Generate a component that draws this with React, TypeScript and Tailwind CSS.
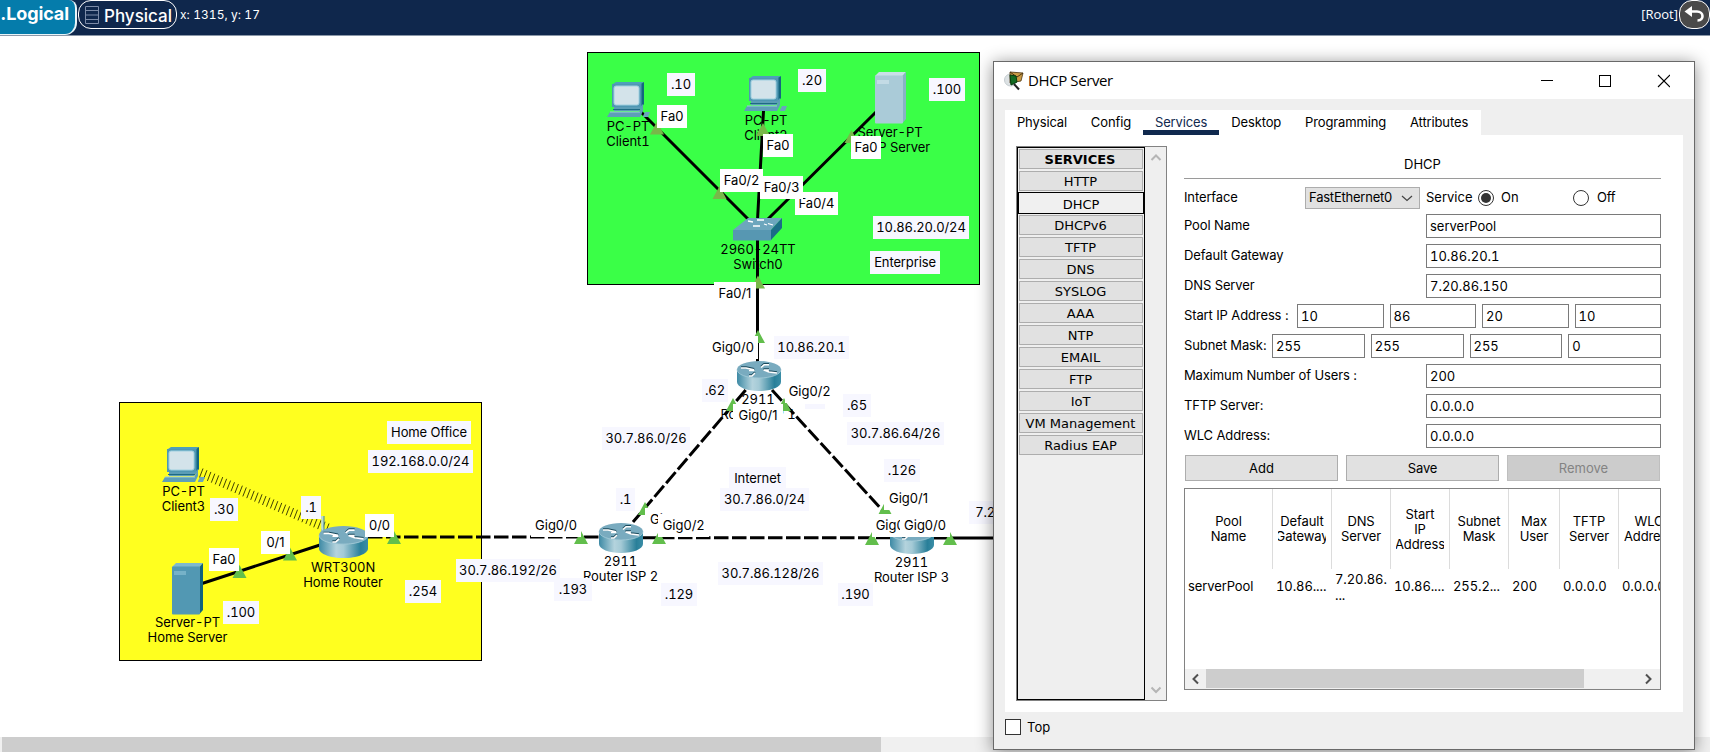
import React from "react";

type LabelData = { x: number; y: number; w: number; text: string; kind?: "port" | "note" };

const LABELS: LabelData[] = [
  { x: 714, y: 282, w: 42, text: "Fa0/1", kind: "port" },
  { x: 657, y: 105, w: 30, text: "Fa0", kind: "port" },
  { x: 763, y: 134, w: 30, text: "Fa0", kind: "port" },
  { x: 851, y: 136, w: 30, text: "Fa0", kind: "port" },
  { x: 720, y: 169, w: 43, text: "Fa0/2", kind: "port" },
  { x: 795, y: 192, w: 43, text: "Fa0/4", kind: "port" },
  { x: 760, y: 176, w: 43, text: "Fa0/3", kind: "port" },
  { x: 708, y: 336, w: 50, text: "Gig0/0", kind: "port" },
  { x: 785, y: 380, w: 49, text: "Gig0/2", kind: "port" },
  { x: 733, y: 404, w: 50, text: "Gig0/1", kind: "port" },
  { x: 645, y: 508, w: 49, text: "Gig0/1", kind: "port" },
  { x: 658, y: 514, w: 51, text: "Gig0/2", kind: "port" },
  { x: 531, y: 514, w: 50, text: "Gig0/0", kind: "port" },
  { x: 872, y: 514, w: 49, text: "Gig0/2", kind: "port" },
  { x: 884, y: 487, w: 49, text: "Gig0/1", kind: "port" },
  { x: 900, y: 514, w: 50, text: "Gig0/0", kind: "port" },
  { x: 209, y: 548, w: 30, text: "Fa0", kind: "port" },
  { x: 261, y: 531, w: 29, text: "0/1", kind: "port" },
  { x: 365, y: 514, w: 29, text: "0/0", kind: "port" },
  { x: 667, y: 73, w: 28, text: ".10" },
  { x: 798, y: 69, w: 28, text: ".20" },
  { x: 929, y: 78, w: 36, text: ".100" },
  { x: 873, y: 216, w: 96, text: "10.86.20.0/24" },
  { x: 870, y: 251, w: 70, text: "Enterprise" },
  { x: 774, y: 336, w: 75, text: "10.86.20.1" },
  { x: 702, y: 379, w: 26, text: ".62" },
  { x: 843, y: 394, w: 28, text: ".65" },
  { x: 847, y: 422, w: 97, text: "30.7.86.64/26" },
  { x: 602, y: 427, w: 88, text: "30.7.86.0/26" },
  { x: 387, y: 421, w: 84, text: "Home Office" },
  { x: 368, y: 450, w: 105, text: "192.168.0.0/24" },
  { x: 210, y: 498, w: 28, text: ".30" },
  { x: 301, y: 496, w: 20, text: ".1" },
  { x: 223, y: 601, w: 36, text: ".100" },
  { x: 405, y: 580, w: 36, text: ".254" },
  { x: 456, y: 559, w: 104, text: "30.7.86.192/26" },
  { x: 729, y: 467, w: 57, text: "Internet" },
  { x: 720, y: 488, w: 89, text: "30.7.86.0/24" },
  { x: 616, y: 488, w: 19, text: ".1" },
  { x: 884, y: 459, w: 36, text: ".126" },
  { x: 969, y: 501, w: 44, text: "7.20." },
  { x: 554, y: 578, w: 38, text: ".193" },
  { x: 661, y: 583, w: 36, text: ".129" },
  { x: 718, y: 562, w: 105, text: "30.7.86.128/26" },
  { x: 838, y: 583, w: 35, text: ".190" },
];

const NAMES = [
  { x: 628, y: 119, lines: ["PC-PT", "Client1"] },
  { x: 766, y: 113, lines: ["PC-PT", "Client2"] },
  { x: 890, y: 125, lines: ["Server-PT", "DHCP Server"] },
  { x: 758, y: 242, lines: ["2960-24TT", "Switch0"] },
  { x: 758, y: 392, lines: ["2911", "Router ISP 1"] },
  { x: 183.5, y: 484, lines: ["PC-PT", "Client3"] },
  { x: 187.5, y: 615, lines: ["Server-PT", "Home Server"] },
  { x: 343, y: 560, lines: ["WRT300N", "Home Router"] },
  { x: 620.5, y: 554, lines: ["2911", "Router ISP 2"] },
  { x: 911.5, y: 555, lines: ["2911", "Router ISP 3"] },
];

/* Apex x, base y of every link-status triangle */
const LINK_LIGHTS: [number, number][] = [
  [657, 134.5], [719.5, 199], [763, 136], [851.5, 143], [758, 288.5], [758, 343],
  [733, 411], [784, 411], [645, 515], [581, 544], [659, 544], [885, 515],
  [872, 545], [950, 545], [239.5, 578], [290, 560.5], [394, 544],
];

const TABS = ["Physical", "Config", "Services", "Desktop", "Programming", "Attributes"];
const SERVICES = ["HTTP", "DHCP", "DHCPv6", "TFTP", "DNS", "SYSLOG", "AAA", "NTP", "EMAIL", "FTP", "IoT", "VM Management", "Radius EAP"];

function Pc({ x, y }: { x: number; y: number }) {
  return (
    <g transform={`translate(${x} ${y})`}>
      <path d="M6 2 L9 0 H37 L34 2Z" fill="#4f9fba" />
      <path d="M34 2 L37 0 V22 L34 26Z" fill="#14667f" />
      <rect x="5" y="2" width="29.500" height="23" fill="#4f97b3" />
      <rect x="7" y="4" width="25" height="19" rx="2" fill="#d3e3ea" stroke="#9fd0e0" strokeWidth="1" />
      <path d="M7 25 H33 L36 22 V25 L32 29 H7Z" fill="#5b9db6" />
      <path d="M6 27.500 H33" stroke="#1d6a84" strokeWidth="1" />
      <path d="M3 30 H32 L36 24 V29 L33 35 H0Z" fill="#5e9fb8" />
      <path d="M3 30 H33" stroke="#9ccbdb" strokeWidth="1" />
      <path d="M36 34 L38 30 H43 L41 35 H36Z" fill="#6aa5bd" />
    </g>
  );
}

function Server({ x, y, front, side, top }: { x: number; y: number; front: string; side: string; top: string }) {
  return (
    <g transform={`translate(${x} ${y})`}>
      <path d="M0 4 L4 0 H31 L27.500 4Z" fill={top} />
      <path d="M27.500 4 L31 0 V47 L27.500 51Z" fill={side} />
      <rect y="3.500" width="28" height="48" rx="1" fill={front} />
      <rect x="2" y="8" width="12" height="4" fill={top} opacity="0.8" />
    </g>
  );
}

function Router({ x, y, w = 44, h = 30 }: { x: number; y: number; w?: number; h?: number }) {
  return (
    <g transform={`translate(${x} ${y}) scale(${w / 44} ${h / 30})`}>
      <path d="M0 8.500 V21 C0 26 10 30 22 30 C34 30 44 26 44 21 V8.500Z" fill="url(#drum)" />
      <ellipse cx="22" cy="8.500" rx="22" ry="8.500" fill="#79abbf" />
      <path d="M0 8.500 C0 13.500 10 17 22 17 C34 17 44 13.500 44 8.500" fill="none" stroke="#a5cbd8" strokeWidth="0.800" />
      <g fill="none" strokeLinejoin="round">
        <path d="M4 7 H9 L17 8.800 M17.500 9.500 H12 M24 6.500 L27 3.800 H32 M18 12 L15 15 H12 M40 12 L32 11 L27 9 H32" stroke="#1a4a5c" strokeWidth="2" transform="translate(0 -0.700)" />
        <path d="M4 7 H9 L17 8.800 M17.500 9.500 H12 M24 6.500 L27 3.800 H32 M18 12 L15 15 H12 M40 12 L32 11 L27 9 H32" stroke="#fff" strokeWidth="1.600" />
      </g>
    </g>
  );
}

function Wireless() {
  const ticks = Array.from({ length: 33 }, (_, i) => {
    const t = i / 32;
    return [201 + t * 126, 473 + t * 55];
  });
  return (
    <g stroke="#2b2b00" strokeWidth="0.900" fill="none">
      {ticks.map(([x, y], i) => (
        <path key={i} d={`M${x + 2} ${y - 4.500} L${x - 1.500} ${y + 4.500}`} />
      ))}
    </g>
  );
}

function Topology() {
  return (
    <div className="relative h-[701px] w-full overflow-hidden bg-white text-[13px] leading-[15px] text-black">
      {/* Canvas origin is the window's top-left corner */}
      <div className="absolute -top-9 left-0 h-[740px] w-[1710px]">
        <div className="absolute left-[587px] top-[52px] h-[233px] w-[393px] border border-black bg-[#3aff47]" />
        <div className="absolute left-[119px] top-[402px] h-[259px] w-[363px] border border-black bg-[#ffff1f]" />
        {NAMES.map((n) => (
          <div key={n.x + "-" + n.y} className="absolute -translate-x-1/2 whitespace-nowrap text-center tabular-nums tracking-[-0.060px]" style={{ left: n.x, top: n.y }}>
            {n.lines.map((l) => (
              <div key={l}>{l}</div>
            ))}
          </div>
        ))}
        <svg className="absolute left-0 top-0" width="1000" height="740" viewBox="0 0 1000 740">
          <defs>
            <linearGradient id="drum" x1="0" x2="1" y1="0" y2="0">
              <stop offset="0" stopColor="#3e8aa5" />
              <stop offset="0.350" stopColor="#b4d3dd" />
              <stop offset="0.500" stopColor="#a4cad6" />
              <stop offset="0.850" stopColor="#297f99" />
              <stop offset="1" stopColor="#3a8da6" />
            </linearGradient>
          </defs>
          <g stroke="#000" strokeWidth="3" fill="none">
            <path d="M640 111 L749 220 M763.500 111 L757.500 220 M876 112 L767 220 M757.500 238 V362 M202 583.500 L320 545 M930 538 H996" />
            <path d="M745.700 390 L633 522 M772 390 L884 512 M368 537 H600 M642 537.700 H892" strokeDasharray="14.500 3.500" />
          </g>
          <Wireless />
          <Pc x={607} y={82} />
          <Pc x={744} y={76} />
          <Pc x={162} y={447} />
          <Server x={875} y={72} front="#aacbd8" side="#88b3c4" top="#c9dfe8" />
          <Server x={172} y={563} front="#5298b3" side="#10637d" top="#7fb9cd" />
          <g transform="translate(733 218)">
            <path d="M0 12 L15 0 H49 L38 12Z" fill="#6da6bd" />
            <path d="M38 12 L49 0 V10 L38 22Z" fill="#1b6d87" />
            <path d="M0 12 H38 V22.500 H0Z" fill="#5797b2" />
            <path d="M15 3 L20 4 M24 2 H31 M35 5.500 L40 7 M20 8 H27 M31 6 L34 7" stroke="#fff" strokeWidth="1.300" />
          </g>
          <Router x={737} y={361} />
          <Router x={599} y={523} />
          <Router x={890} y={524} />
          <path d="M322.500 516 V532" stroke="#b9d9d8" strokeWidth="2.500" />
          <path d="M324 516 V532" stroke="#3c8797" strokeWidth="1" />
          <Router x={319} y={526} w={49} h={32} />
          {LINK_LIGHTS.map(([x, y]) => (
            <path key={x + "-" + y} fill={y < 300 ? "#78b84a" : "#62be4c"} d={`M${x} ${y - 13} L${x + 7} ${y} H${x - 7}Z`} />
          ))}
        </svg>
        <div className="absolute left-[805px] top-[404px] h-[5px] w-5 bg-[#f6f6ff]" />
        {LABELS.map((l, i) => (
          <div
            key={i}
            className={
              "absolute flex h-[23px] items-center justify-center overflow-hidden whitespace-nowrap " +
              (l.kind === "port" ? "bg-white" : "bg-[#f7f7ff]")
            }
            style={{ left: l.x, top: l.y, width: l.w }}
          >
            <span className={l.kind === "port" ? "proportional-nums" : "tabular-nums tracking-[-0.120px]"}>{l.text}</span>
          </div>
        ))}
      </div>
    </div>
  );
}

function Field({ value, className }: { value: string; className: string }) {
  return <div className={"flex h-6 items-center border border-[#7a7a7a] bg-white pl-[3px] pt-px tabular-nums " + className}>{value}</div>;
}

function Row({ label, children }: { label: string; children: React.ReactNode }) {
  return (
    <div className="mb-1.5 flex h-6 items-center justify-between">
      <span className="whitespace-nowrap tracking-[-0.120px]">{label}</span>
      {children}
    </div>
  );
}

function Radio({ on }: { on?: boolean }) {
  return (
    <span className="flex size-4 items-center justify-center rounded-full border border-[#333] bg-white">
      {on && <span className="size-2.5 rounded-full bg-[#333]" />}
    </span>
  );
}

function Chevron({ d, color, width = 1.2 }: { d: string; color: string; width?: number }) {
  return (
    <svg width="12" height="12" viewBox="0 0 12 12" fill="none" stroke={color} strokeWidth={width}>
      <path d={d} />
    </svg>
  );
}

function TitleBar() {
  return (
    <div className="flex h-[37px] items-center bg-white pl-2.5">
      <svg width="20" height="20" viewBox="0 0 20 20">
        <circle cx="6.500" cy="9" r="6" fill="#dde2e4" stroke="#c4ccd0" />
        <path d="M6 1 L19 2 L17 10 L6 12Z" fill="#c99a45" stroke="#4a3312" strokeWidth="0.800" />
        <path d="M6 1 L13 6 L19 2" fill="none" stroke="#4a3312" />
        <path d="M6 4 L12 5 L13 11 L7 14Z" fill="#136b22" stroke="#053d0d" />
        <path d="M10 13 L15 18.500" stroke="#222" strokeWidth="2" />
      </svg>
      <span className="ml-1 pb-px font-['Open_Sans','Noto_Sans',sans-serif] text-[15px] tracking-[-0.400px]">DHCP Server</span>
      <svg className="ml-auto mr-6" width="130" height="14" viewBox="0 0 130 14" fill="none" stroke="#000" strokeWidth="1.200" shapeRendering="crispEdges">
        <path d="M1 6.500 H13" />
        <rect x="59.500" y="1.500" width="11" height="11" />
        <path d="M118 1 L130 13 M130 1 L118 13" shapeRendering="auto" strokeWidth="1.100" />
      </svg>
    </div>
  );
}

function ServiceList() {
  return (
    <div className="flex h-[555px] w-[151px] border border-[#828282] bg-[#efefef] font-['DejaVu_Sans',Verdana,sans-serif] text-[13px]">
      <div className="flex h-[553px] w-32 flex-col gap-0.5 border border-black px-px pt-px">
        <div className="flex h-5 shrink-0 items-center justify-center border border-[#adadad] bg-[#e1e1e1] pt-px pr-0.5 font-bold">SERVICES</div>
        {SERVICES.map((s) => (
          <div
            key={s}
            className={
              s === "DHCP"
                ? "-mx-px -my-px flex h-[22px] shrink-0 items-center justify-center border border-black bg-[#f0f0f0] pt-[3px]"
                : "flex h-5 shrink-0 items-center justify-center border border-[#adadad] bg-[#e1e1e1] pt-px pr-px"
            }
          >
            {s}
          </div>
        ))}
      </div>
      <div className="flex flex-1 flex-col items-center justify-between py-1">
        <Chevron d="M1.500 9 L6 4.500 L10.500 9" color="#b5b5b5" width={2} />
        <Chevron d="M1.500 3.500 L6 8 L10.500 3.500" color="#b5b5b5" width={2} />
      </div>
    </div>
  );
}

function HeaderCell({ lines, className }: { lines: string[]; className: string }) {
  return (
    <div className={"flex h-20 shrink-0 flex-col items-center justify-center overflow-hidden whitespace-nowrap px-[5px] leading-[15px] " + className}>
      <div className="flex w-full flex-col items-center overflow-hidden">
        {lines.map((l) => (
          <div key={l}>{l}</div>
        ))}
      </div>
    </div>
  );
}

function PoolTable() {
  return (
    <div className="mt-[7px] flex h-[202px] flex-col overflow-hidden border border-[#828282] bg-white tracking-[-0.100px]">
      <div className="flex">
        <HeaderCell lines={["Pool", "Name"]} className="w-[88px] border-r border-[#dcdcdc]" />
        <HeaderCell lines={["Default", "Gateway"]} className="w-[59px] border-r border-[#dcdcdc]" />
        <HeaderCell lines={["DNS", "Server"]} className="w-[59px] border-r border-[#dcdcdc]" />
        <HeaderCell lines={["Start", "IP", "Address"]} className="w-[59px] border-r border-[#dcdcdc]" />
        <HeaderCell lines={["Subnet", "Mask"]} className="w-[59px] border-r border-[#dcdcdc]" />
        <HeaderCell lines={["Max", "User"]} className="w-[51px] border-r border-[#dcdcdc]" />
        <HeaderCell lines={["TFTP", "Server"]} className="w-[59px] border-r border-[#dcdcdc]" />
        <HeaderCell lines={["WLC", "Address"]} className="w-[60px]" />
      </div>
      <div className="flex h-9 items-center whitespace-nowrap tabular-nums">
        <div className="w-[88px] shrink-0 pl-[3px]">serverPool</div>
        <div className="w-[59px] shrink-0 pl-[3px]">10.86....</div>
        <div className="w-[59px] shrink-0 pl-[3px] leading-[16px]">
          7.20.86.
          <br />
          ...
        </div>
        <div className="w-[59px] shrink-0 pl-[3px]">10.86....</div>
        <div className="w-[59px] shrink-0 pl-[3px]">255.2...</div>
        <div className="w-[51px] shrink-0 pl-[3px]">200</div>
        <div className="w-[59px] shrink-0 pl-[3px]">0.0.0.0</div>
        <div className="w-[60px] shrink-0 pl-[3px]">0.0.0.0</div>
      </div>
      <div className="mt-auto flex h-5 items-center bg-[#f0f0f0]">
        <div className="flex w-[21px] justify-center">
          <Chevron d="M8 1.500 L3.500 6 L8 10.500" color="#505050" width={2} />
        </div>
        <div className="h-full w-[378px] border-b border-[#f0f0f0] bg-[#cdcdcd]" />
        <div className="ml-auto mr-1.5">
          <Chevron d="M4 1.500 L8.500 6 L4 10.500" color="#505050" width={2} />
        </div>
      </div>
    </div>
  );
}

function DhcpForm() {
  return (
    <div className="flex w-[477px] flex-col">
      <div className="h-[33px] border-b border-[#9a9a9a] pt-2.5 text-center leading-4">DHCP</div>
      <div className="mb-1.5 mt-2 flex h-[21px] items-center">
        <span className="w-[121px] tracking-[-0.120px]">Interface</span>
        <div className="flex h-[22px] w-[115px] shrink-0 items-center justify-between border border-[#adadad] bg-[#e1e1e1] pl-[3px] pr-1.5 tracking-[-0.220px]">
          FastEthernet0
          <Chevron d="M1 4 L6 8.500 L11 4" color="#444" />
        </div>
        <span className="ml-1.5 w-[52px]">Service</span>
        <Radio on />
        <span className="ml-[7px] w-[72px]">On</span>
        <Radio />
        <span className="ml-2 tracking-[-0.200px]">Off</span>
      </div>
      <Row label="Pool Name"><Field value="serverPool" className="w-[235px]" /></Row>
      <Row label="Default Gateway"><Field value="10.86.20.1" className="w-[235px]" /></Row>
      <Row label="DNS Server"><Field value="7.20.86.150" className="w-[235px]" /></Row>
      <Row label="Start IP Address :">
        <div className="flex w-[364px] gap-1.5">
          <Field value="10" className="flex-1" />
          <Field value="86" className="flex-1" />
          <Field value="20" className="flex-1" />
          <Field value="10" className="flex-1" />
        </div>
      </Row>
      <Row label="Subnet Mask:">
        <div className="flex w-[389px] gap-1.5">
          <Field value="255" className="flex-1" />
          <Field value="255" className="flex-1" />
          <Field value="255" className="flex-1" />
          <Field value="0" className="flex-1" />
        </div>
      </Row>
      <Row label="Maximum Number of Users :"><Field value="200" className="w-[235px]" /></Row>
      <Row label="TFTP Server:"><Field value="0.0.0.0" className="w-[235px]" /></Row>
      <Row label="WLC Address:"><Field value="0.0.0.0" className="w-[235px]" /></Row>
      <div className="mt-px flex gap-2 px-px">
        <div className="flex h-[26px] flex-1 items-center justify-center border border-[#adadad] bg-[#e1e1e1] pt-px">Add</div>
        <div className="flex h-[26px] flex-1 items-center justify-center border border-[#adadad] bg-[#e1e1e1] pt-px tracking-[-0.200px]">Save</div>
        <div className="flex h-[26px] flex-1 items-center justify-center border border-[#bfbfbf] bg-[#ccc] pt-px text-[#838383]">Remove</div>
      </div>
      <PoolTable />
    </div>
  );
}

function ServerDialog() {
  return (
    <div className="absolute left-[993px] top-[61px] flex h-[689px] w-[702px] flex-col border border-[#696969] bg-[#efefef] text-[13px] text-black shadow-[0_2px_16px_rgba(0,0,0,0.45)]">
      <TitleBar />
      <div className="ml-[11px] mt-[11px] flex h-[25px] w-[476px] bg-white tracking-[-0.120px]">
        {TABS.map((t) => (
          <div
            key={t}
            className={
              t === "Services"
                ? "flex h-full items-center border-b-[5px] border-[#10294e] px-3 text-[#10294e]"
                : "flex h-full items-center px-[11.900px] pb-[5px]"
            }
          >
            <span className="pt-[6px]">{t}</span>
          </div>
        ))}
      </div>
      <div className="ml-[11px] flex h-[577px] w-[678px] gap-[17px] bg-white pl-[11px]">
        <div className="pt-[11px]"><ServiceList /></div>
        <div className="pt-[11px]"><DhcpForm /></div>
      </div>
      <div className="ml-[11px] mt-[7px] flex h-4 items-center gap-1.5">
        <span className="size-4 border border-[#333] bg-white" />
        <span className="pt-0.5">Top</span>
      </div>
    </div>
  );
}

function TopBar() {
  return (
    <div className="flex h-9 items-start border-b border-[#8a97a8] bg-[#0f274c] text-white">
      <div className="flex h-[35px] w-[77px] items-start justify-end overflow-hidden rounded-br-xl rounded-tr-lg border-b border-r-2 border-[#e8f4f8] bg-[#057cab] pr-1.5 pt-0.5">
        <span className="whitespace-nowrap text-[18px] font-bold leading-6 tracking-[-0.100px]">.Logical</span>
      </div>
      <div className="ml-px flex h-[29px] w-[99px] items-center rounded-[13px] border border-white pl-1.5">
        <svg width="14" height="18" viewBox="0 0 14 18" fill="none" stroke="#7d8ca8">
          <path d="M0.500 0.500 H13.500 V17.500 H0.500Z M0.500 4.500 H13.500 M0.500 9 H13.500 M0.500 13.500 H13.500" />
        </svg>
        <span className="ml-[5px] pt-0.5 text-[17px] font-medium leading-6">Physical</span>
      </div>
      <span className="ml-[3px] text-[12px] leading-[30px] tracking-[0.050px] tabular-nums">x: 1315, y: 17</span>
      <span className="ml-auto font-['Open_Sans','Noto_Sans',sans-serif] text-[13px] leading-7">[Root]</span>
      <div className="ml-px flex h-[29px] w-[31px] items-center justify-center rounded-[13px] border border-white bg-[#4a4a4a]">
        <svg width="21" height="17" viewBox="0 0 21 17" fill="none" stroke="#fff" strokeWidth="2.600">
          <path d="M6 5.500 H13 C20 5.500 20.500 14.500 13.500 14.500" />
          <path d="M0.500 5.500 L8 0 V11Z" fill="#fff" stroke="none" />
        </svg>
      </div>
    </div>
  );
}

export default function App() {
  return (
    <div className="relative flex h-[752px] w-[1710px] flex-col overflow-hidden bg-white font-[Inter,'Liberation_Sans',sans-serif]">
      <TopBar />
      <Topology />
      <div className="flex flex-1 bg-[#f0f0f0] pl-0.5">
        <div className="w-[879px] bg-[#cdcdcd]" />
      </div>
      <ServerDialog />
    </div>
  );
}
